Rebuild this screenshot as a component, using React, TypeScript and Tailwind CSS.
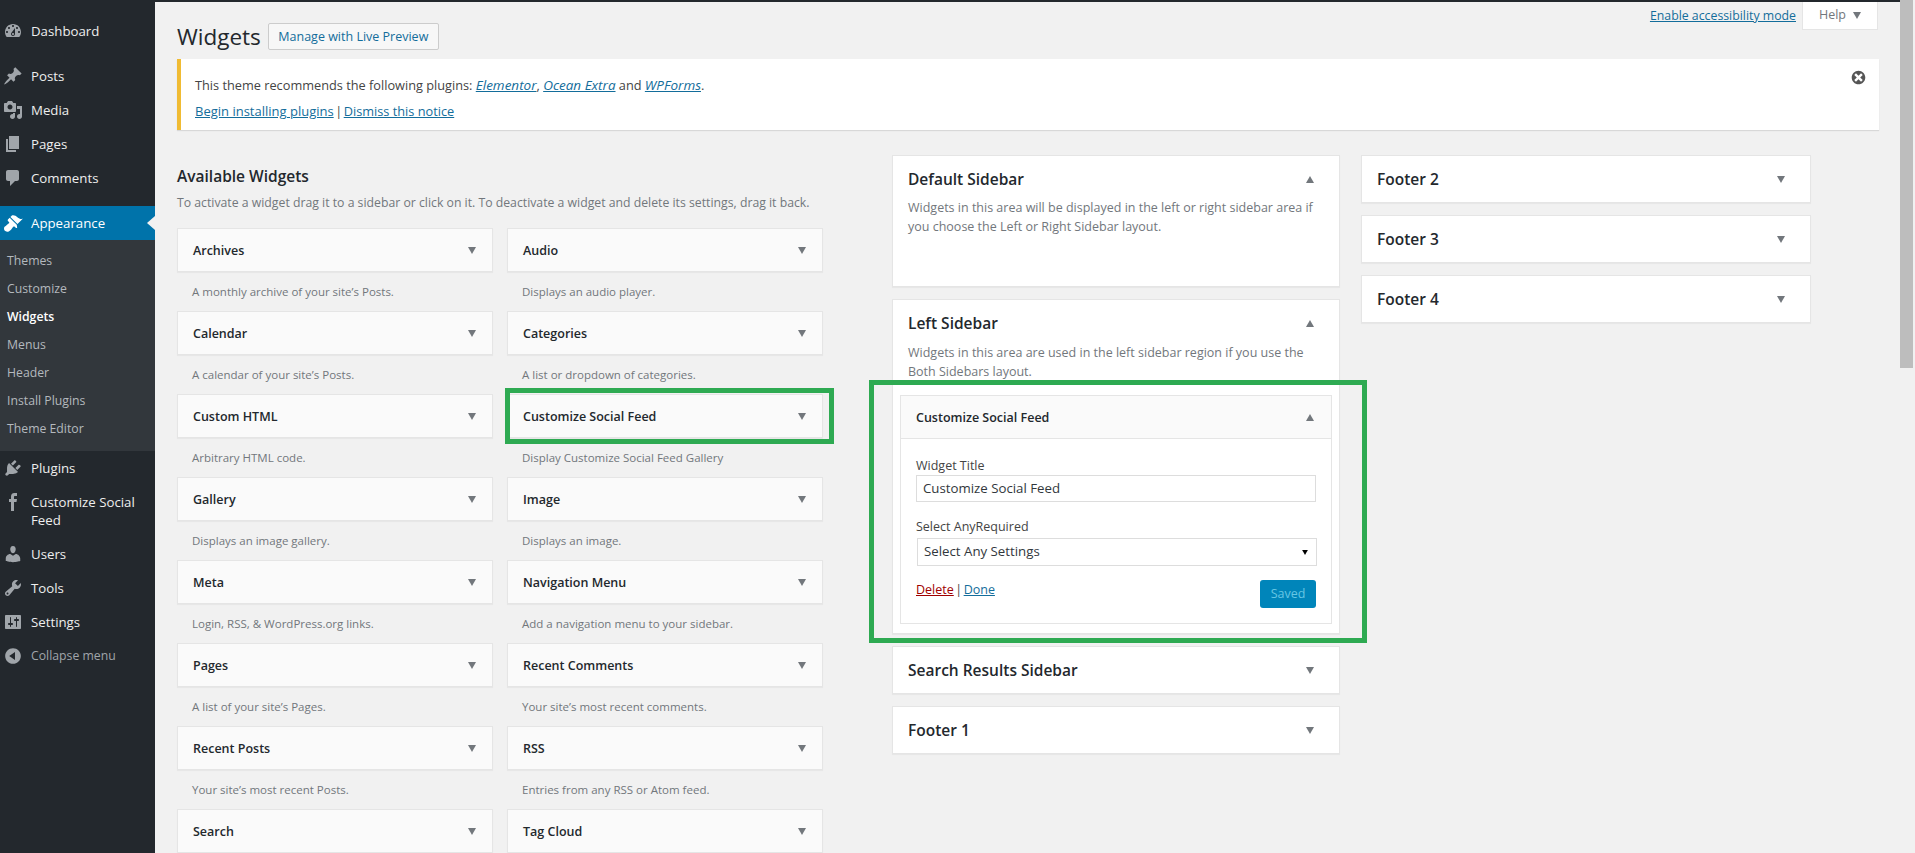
const font = { fontFamily: '"Open Sans", "Noto Sans", sans-serif' };

const icons: Record<string, string> = {
  dashboard:
    "M3.76 16h12.48c1.1-1.37 1.76-3.11 1.76-5 0-4.42-3.58-8-8-8s-8 3.58-8 8c0 1.89.66 3.63 1.76 5zM10 4c.55 0 1 .45 1 1s-.45 1-1 1-1-.45-1-1 .45-1 1-1zM6 6c.55 0 1 .45 1 1s-.45 1-1 1-1-.45-1-1 .45-1 1-1zm8 0c.55 0 1 .45 1 1s-.45 1-1 1-1-.45-1-1 .45-1 1-1zm-5.37 5.55L12 7v6c0 1.1-.9 2-2 2s-2-.9-2-2c0-.57.24-1.08.63-1.45zM4 10c.55 0 1 .45 1 1s-.45 1-1 1-1-.45-1-1 .45-1 1-1zm12 0c.55 0 1 .45 1 1s-.45 1-1 1-1-.45-1-1 .45-1 1-1zm-5 3c0-.55-.45-1-1-1s-1 .45-1 1 .45 1 1 1 1-.45 1-1z",
  posts:
    "M10.44 3.02l1.82-1.82 6.36 6.35-1.83 1.82c-1.05-.68-2.48-.57-3.41.36l-.75.75c-.92.93-1.04 2.35-.35 3.41l-1.83 1.82-2.41-2.41-2.8 2.79c-.42.42-3.38 2.71-3.8 2.29s1.86-3.39 2.28-3.81l2.79-2.79L4.1 9.36l1.83-1.82c1.05.69 2.48.57 3.4-.36l.75-.75c.93-.92 1.05-2.35.36-3.41z",
  media:
    "M13 11V4c0-.55-.45-1-1-1h-1.67L9 1H5L3.67 3H2c-.55 0-1 .45-1 1v7c0 .55.45 1 1 1h10c.55 0 1-.45 1-1zM7 4.5c1.38 0 2.5 1.12 2.5 2.5S8.38 9.5 7 9.5 4.5 8.38 4.5 7 5.62 4.5 7 4.5zM14 6h5v10.5c0 1.38-1.12 2.5-2.5 2.5S14 17.88 14 16.5s1.12-2.5 2.5-2.5c.17 0 .34.02.5.05V9h-3V6zm-4 8.05V13h2v3.5c0 1.38-1.12 2.5-2.5 2.5S7 17.88 7 16.5 8.12 14 9.5 14c.17 0 .34.02.5.05z",
  pages: "M6 15V2h10v13H6zm-1 1h8v2H3V5h2v11z",
  comments:
    "M5 2h9c1.1 0 2 .9 2 2v7c0 1.1-.9 2-2 2h-2l-5 5v-5H5c-1.1 0-2-.9-2-2V4c0-1.1.9-2 2-2z",
  appearance:
    "M14.48 11.06L7.41 3.99l1.5-1.5c.5-.56 2.3-.47 3.51.32 1.21.8 1.43 1.28 2.91 2.1 1.18.64 2.45 1.26 4.45.85zm-.71.71L6.7 4.7 4.93 6.47c-.39.39-.39 1.02 0 1.41l1.06 1.06c.39.39.39 1.03 0 1.42-.6.6-1.43 1.11-2.21 1.69-.35.26-.7.53-1.01.84C1.43 13.23 1 14.45 1 15.57c0 .91.28 1.75.8 2.3.52.55 1.36.83 2.27.83 1.12 0 2.34-.43 3.68-1.77.31-.31.58-.66.84-1.01.58-.78 1.09-1.61 1.69-2.21.39-.39 1.03-.39 1.42 0l1.06 1.06c.39.39 1.02.39 1.41 0z",
  plugins:
    "M13.11 4.36L9.87 7.6 8 5.73l3.24-3.24c.35-.34 1.05-.2 1.56.32.52.51.66 1.21.31 1.55zm-8 1.77l.91-1.12 9.01 9.01-1.19.84c-.71.71-2.63 1.16-3.82 1.16H6.14L4.9 17.26c-.59.59-1.54.59-2.12 0-.59-.58-.59-1.53 0-2.12l1.24-1.24v-3.88c0-1.13.4-3.19 1.09-3.89zm7.26 3.97l3.24-3.24c.34-.35 1.04-.21 1.55.31.52.51.66 1.21.31 1.55l-3.24 3.25z",
  facebook:
    "M12 4h2V1h-2.5C9 1 8 2.6 8 4.7V7H6v3h2v9h3v-9h2.5l.5-3h-3V5c0-.6.3-1 1-1z",
  users:
    "M10 9.25c-2.27 0-2.73-3.44-2.73-3.44C7 4.02 7.82 2 9.97 2c2.16 0 2.98 2.02 2.71 3.81 0 0-.41 3.44-2.68 3.44zm0 2.57L12.72 10c2.39 0 4.52 2.33 4.52 4.53v2.49s-3.65 1.13-7.24 1.13c-3.65 0-7.24-1.13-7.24-1.13v-2.49c0-2.25 1.94-4.48 4.47-4.48z",
  tools:
    "M16.68 9.77c-1.34 1.34-3.3 1.67-4.95.99l-5.41 6.52c-.99.99-2.59.99-3.58 0s-.99-2.59 0-3.57l6.52-5.42c-.68-1.65-.35-3.61.99-4.95 1.28-1.28 3.12-1.62 4.72-1.06l-2.89 2.89 2.82 2.82 2.86-2.87c.53 1.58.18 3.39-1.08 4.65zM3.81 16.21c.4.39 1.04.39 1.43 0 .4-.4.4-1.04 0-1.43-.39-.4-1.03-.4-1.43 0-.39.39-.39 1.03 0 1.43z",
  settings:
    "M18 16V4c0-.55-.45-1-1-1H3c-.55 0-1 .45-1 1v12c0 .55.45 1 1 1h14c.55 0 1-.45 1-1zM8 11h1c.55 0 1 .45 1 1s-.45 1-1 1H8v1.5c0 .28-.22.5-.5.5s-.5-.22-.5-.5V13H6c-.55 0-1-.45-1-1s.45-1 1-1h1V5.5c0-.28.22-.5.5-.5s.5.22.5.5V11zm5-2h-1c-.55 0-1-.45-1-1s.45-1 1-1h1V5.5c0-.28.22-.5.5-.5s.5.22.5.5V7h1c.55 0 1 .45 1 1s-.45 1-1 1h-1v5.5c0 .28-.22.5-.5.5s-.5-.22-.5-.5V9z",
  collapse:
    "M10 2.16c4.33 0 7.84 3.51 7.84 7.84s-3.51 7.84-7.84 7.84S2.16 14.33 2.16 10 5.71 2.16 10 2.16zm2 11.72V6.12L6.18 9.97z",
  dismiss:
    "M10 2c4.42 0 8 3.58 8 8s-3.58 8-8 8-8-3.58-8-8 3.58-8 8-8zm5 11l-3-3 3-3-2-2-3 3-3-3-2 2 3 3-3 3 2 2 3-3 3 3z",
};

function Dashicon({ name, className }: { name: string; className: string }) {
  return (
    <svg viewBox="0 0 20 20" className={className} fill="currentColor">
      <path fillRule="evenodd" d={icons[name]} />
    </svg>
  );
}

function Arrow({ up, className = "w-[8px] h-[7px] text-[#72777c]" }: { up?: boolean; className?: string }) {
  return (
    <svg viewBox="0 0 8 7" className={className} fill="currentColor">
      <path d={up ? "M4 0l4 7H0z" : "M0 0h8L4 7z"} />
    </svg>
  );
}

function MenuItem({ icon, label, active }: { icon: string; label: string; active?: boolean }) {
  return (
    <div className={`flex py-[8px] text-[13.25px] leading-[18px] ${active ? "bg-[#0073aa] text-white relative" : "text-[#eeeeee]"}`}>
      <div className="w-[31px] h-[18px] shrink-0 pl-[3px]">
        <Dashicon name={icon} className={`w-[20px] h-[20px] -mt-px ${active ? "text-white" : "text-[#a0a5aa]"}`} />
      </div>
      <span className="pr-[14px]">{label}</span>
      {active && (
        <span className="absolute right-0 top-[10px] border-y-[7px] border-r-[8px] border-y-transparent border-r-[#f1f1f1]" />
      )}
    </div>
  );
}

function Sidebar() {
  const subs = ["Themes", "Customize", "Widgets", "Menus", "Header", "Install Plugins", "Theme Editor"];
  return (
    <div className="w-[155px] shrink-0 bg-[#23282d] pt-[14px]">
      <MenuItem icon="dashboard" label="Dashboard" />
      <div className="h-[11px]" />
      <MenuItem icon="posts" label="Posts" />
      <MenuItem icon="media" label="Media" />
      <MenuItem icon="pages" label="Pages" />
      <MenuItem icon="comments" label="Comments" />
      <div className="h-[11px]" />
      <MenuItem icon="appearance" label="Appearance" active />
      <div className="bg-[#32373c] pt-[7px] pb-[8px]">
        {subs.map((s) => (
          <div
            key={s}
            className={`h-[28px] pl-[7px] text-[12.25px] leading-[28px] ${s === "Widgets" ? "font-semibold text-white" : "text-[#b4b9be]"}`}
          >
            {s}
          </div>
        ))}
      </div>
      <MenuItem icon="plugins" label="Plugins" />
      <MenuItem icon="facebook" label="Customize Social Feed" />
      <MenuItem icon="users" label="Users" />
      <MenuItem icon="tools" label="Tools" />
      <MenuItem icon="settings" label="Settings" />
      <div className="flex py-[8px] text-[12.25px] leading-[18px] text-[#a0a5aa]">
        <div className="w-[31px] h-[18px] shrink-0 pl-[3px]">
          <Dashicon name="collapse" className="w-[20px] h-[20px] -mt-px" />
        </div>
        <span>Collapse menu</span>
      </div>
    </div>
  );
}

const widgets: [string, string][] = [
  ["Archives", "A monthly archive of your site’s Posts."],
  ["Audio", "Displays an audio player."],
  ["Calendar", "A calendar of your site’s Posts."],
  ["Categories", "A list or dropdown of categories."],
  ["Custom HTML", "Arbitrary HTML code."],
  ["Customize Social Feed", "Display Customize Social Feed Gallery"],
  ["Gallery", "Displays an image gallery."],
  ["Image", "Displays an image."],
  ["Meta", "Login, RSS, & WordPress.org links."],
  ["Navigation Menu", "Add a navigation menu to your sidebar."],
  ["Pages", "A list of your site’s Pages."],
  ["Recent Comments", "Your site’s most recent comments."],
  ["Recent Posts", "Your site’s most recent Posts."],
  ["RSS", "Entries from any RSS or Atom feed."],
  ["Search", ""],
  ["Tag Cloud", ""],
];

function WidgetCard({ title, desc, marked }: { title: string; desc: string; marked: boolean }) {
  return (
    <div className="relative h-[83px]">
      <div className="h-[44px] bg-[#fafafa] border border-[#e5e5e5] shadow-[0_1px_1px_rgba(0,0,0,0.04)] flex items-center justify-between pl-[15px] pr-[16px] text-[12.5px] font-semibold text-[#23282d]">
        <span className="mt-[2px]">{title}</span>
        <Arrow />
      </div>
      {desc && <p className="pl-[15px] pt-[11px] text-[11.5px] leading-[18px] text-[#72777c]">{desc}</p>}
      {marked && (
        <div className="absolute -left-[2px] -right-[11px] -top-[6px] h-[56px] border-[5px] border-[#2eaa52]" />
      )}
    </div>
  );
}

function SidebarBox({ title, open, children }: { title: string; open?: boolean; children?: React.ReactNode }) {
  return (
    <div className="bg-white border border-[#e5e5e5] shadow-[0_1px_1px_rgba(0,0,0,0.04)]">
      <div className="h-[46px] flex items-center justify-between pl-[15px] pr-[25px] text-[15.5px] font-semibold text-[#23282d]">
        <span className="mt-[2px]">{title}</span>
        <Arrow up={open} />
      </div>
      {children}
    </div>
  );
}

function OpenWidget() {
  return (
    <div className="mx-[7px] border border-[#e5e5e5]">
      <div className="h-[43px] bg-[#fafafa] border-b border-[#e5e5e5] flex items-center justify-between pl-[15px] pr-[17px] text-[12.5px] font-semibold text-[#23282d]">
        <span className="mt-[2px]">Customize Social Feed</span>
        <Arrow up />
      </div>
      <div className="bg-white pt-[18px] px-[15px] pb-[15px] text-[12.5px] text-[#444444]">
        <div className="leading-[18px]">Widget Title</div>
        <div className="h-[27px] border border-[#dddddd] pl-[6px] text-[13.25px] leading-[25px] text-[#32373c]">Customize Social Feed</div>
        <div className="mt-[16px] leading-[18px]">Select AnyRequired</div>
        <div className="h-[28px] mt-[2px] ml-px -mr-px border border-[#dddddd] pl-[6px] pr-[8px] flex items-center justify-between text-[13.25px] text-[#32373c]">
          <span>Select Any Settings</span>
          <Arrow className="w-[6px] h-[5px] text-black" />
        </div>
        <div className="mt-[14px] flex justify-between items-start">
          <div className="mt-[1px] leading-[18px]">
            <a className="text-[#a00000] underline">Delete</a>
            <span className="mx-[1.5px]">|</span>
            <a className="text-[#136d9b] underline">Done</a>
          </div>
          <button className="w-[56px] h-[28px] bg-[#0085ba] rounded-[3px] text-[#66c6e4]">Saved</button>
        </div>
      </div>
    </div>
  );
}

function Main() {
  return (
    <div className="relative flex-1 min-w-0 bg-[#f1f1f1] border-t-2 border-[#23282d] pl-[22px] pr-[21px]">
      {/* screen meta links */}
      <div className="absolute right-[22px] top-0 flex items-start gap-[6px]">
        <a className="mt-[5px] text-[12.3px] leading-[18px] text-[#136d9b] underline">Enable accessibility mode</a>
        <div className="w-[76px] h-[28px] bg-white border border-t-0 border-[#e5e5e5] flex items-center justify-center gap-[7px] text-[12.5px] text-[#72777c]">
          Help <Arrow />
        </div>
      </div>

      <div className="flex items-center gap-[7px] h-[57px] pt-[12px]">
        <h1 className="text-[22.5px] text-[#23282d]">Widgets</h1>
        <button className="h-[27px] w-[171px] pt-[1px] bg-[#f7f7f7] border border-[#cccccc] rounded-[2px] text-[12.5px] text-[#136d9b]">
          Manage with Live Preview
        </button>
      </div>

      <div className="relative h-[71px] bg-white border-l-4 border-[#f0bb33] shadow-[0_1px_1px_rgba(0,0,0,0.1)] pl-[14px] pt-[17px] text-[12.75px] leading-[18px] text-[#444444]">
        <p>
          This theme recommends the following plugins:{" "}
          <a className="italic font-medium text-[13.5px] text-[#136d9b] underline">Elementor</a>,{" "}
          <a className="italic font-medium text-[13.5px] text-[#136d9b] underline">Ocean Extra</a> and{" "}
          <a className="italic font-medium text-[13.5px] text-[#136d9b] underline">WPForms</a>.
        </p>
        <p className="mt-[8px]">
          <a className="text-[13px] text-[#136d9b] underline">Begin installing plugins</a>
          <span className="mx-[1.5px]">|</span>
          <a className="text-[#136d9b] underline">Dismiss this notice</a>
        </p>
        <Dashicon name="dismiss" className="absolute right-[12px] top-[10px] w-[17px] h-[17px] text-[#555555]" />
      </div>

      <div className="flex mt-[25px]">
        <div className="w-[645px] shrink-0">
          <h2 className="text-[15.5px] leading-[22px] font-semibold text-[#23282d] mt-[10px]">Available Widgets</h2>
          <p className="mt-[7px] text-[12.25px] leading-[18px] whitespace-nowrap text-[#72777c]">
            To activate a widget drag it to a sidebar or click on it. To deactivate a widget and delete its settings, drag it back.
          </p>
          <div className="grid grid-cols-[316px_316px] gap-x-[14px] mt-[16px]">
            {widgets.map(([t, d]) => (
              <WidgetCard key={t} title={t} desc={d} marked={t === "Customize Social Feed"} />
            ))}
          </div>
        </div>

        <div className="w-[448px] ml-[70px] shrink-0 flex flex-col gap-[12px]">
          <SidebarBox title="Default Sidebar" open>
            <p className="px-[15px] -mt-[4px] pb-[50px] text-[12.5px] leading-[19px] text-[#72777c]">
              Widgets in this area will be displayed in the left or right sidebar area if you choose the Left or Right Sidebar layout.
            </p>
          </SidebarBox>
          <div className="relative">
            <SidebarBox title="Left Sidebar" open>
              <p className="px-[15px] -mt-[3px] pb-[14px] text-[12.5px] leading-[19px] text-[#72777c]">
                Widgets in this area are used in the left sidebar region if you use the Both Sidebars layout.
              </p>
              <OpenWidget />
              <div className="h-[9px]" />
            </SidebarBox>
            <div className="absolute -left-[23px] -right-[27px] top-[81px] h-[263px] border-[5px] border-[#2eaa52]" />
          </div>
          <SidebarBox title="Search Results Sidebar" />
          <SidebarBox title="Footer 1" />
        </div>

        <div className="w-[450px] ml-[21px] shrink-0 flex flex-col gap-[12px]">
          <SidebarBox title="Footer 2" />
          <SidebarBox title="Footer 3" />
          <SidebarBox title="Footer 4" />
        </div>
      </div>
    </div>
  );
}

export default function App() {
  return (
    <div className="flex w-[1915px] h-[853px] overflow-hidden" style={font}>
      <Sidebar />
      <Main />
      <div className="w-[15px] shrink-0 bg-[#f1f1f1]">
        <div className="w-[13px] h-[368px] bg-[#bdbdbd]" />
      </div>
    </div>
  );
}
